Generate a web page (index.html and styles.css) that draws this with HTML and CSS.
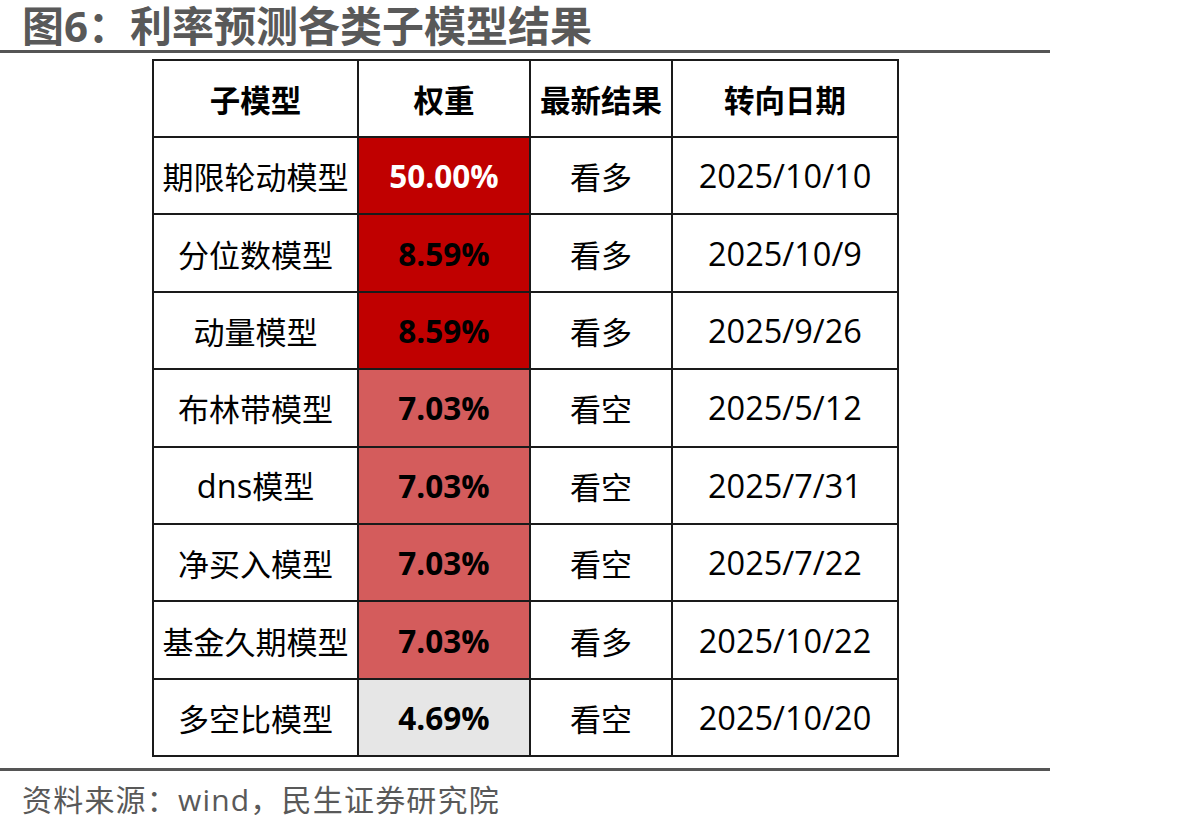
FILE: index.html
```html
<!DOCTYPE html>
<html lang="zh">
<head>
<meta charset="utf-8">
<title>图6：利率预测各类子模型结果</title>
<link rel="stylesheet" href="styles.css">
</head>
<body>
<div class="page">
  <h1 class="title">图6：利率预测各类子模型结果</h1>
  <div class="rule"></div>
  <div class="table-wrap">
    <table class="models">
      <colgroup>
        <col class="c1"><col class="c2"><col class="c3"><col class="c4">
      </colgroup>
      <thead>
        <tr><th>子模型</th><th>权重</th><th>最新结果</th><th>转向日期</th></tr>
      </thead>
      <tbody>
        <tr><td>期限轮动模型</td><td class="w dark white">50.00%</td><td>看多</td><td class="d">2025/10/10</td></tr>
        <tr><td>分位数模型</td><td class="w dark">8.59%</td><td>看多</td><td class="d">2025/10/9</td></tr>
        <tr><td>动量模型</td><td class="w dark">8.59%</td><td>看多</td><td class="d">2025/9/26</td></tr>
        <tr><td>布林带模型</td><td class="w mid">7.03%</td><td>看空</td><td class="d">2025/5/12</td></tr>
        <tr><td><span class="lat">dns</span>模型</td><td class="w mid">7.03%</td><td>看空</td><td class="d">2025/7/31</td></tr>
        <tr><td>净买入模型</td><td class="w mid">7.03%</td><td>看空</td><td class="d">2025/7/22</td></tr>
        <tr><td>基金久期模型</td><td class="w mid">7.03%</td><td>看多</td><td class="d">2025/10/22</td></tr>
        <tr><td>多空比模型</td><td class="w light">4.69%</td><td>看空</td><td class="d">2025/10/20</td></tr>
      </tbody>
    </table>
  </div>
  <div class="rule"></div>
  <p class="source">资料来源：wind，民生证券研究院</p>
</div>
</body>
</html>
```
FILE: styles.css
```css
html, body {
  margin: 0;
  padding: 0;
  background: #ffffff;
}
.page {
  width: 1199px;
  font-family: "Open Sans", "Noto Sans CJK SC", sans-serif;
}
.title {
  margin: 0;
  padding: 0 0 0 22px;
  height: 50px;
  box-sizing: border-box;
  font-family: "Open Sans", "Noto Sans CJK SC", sans-serif;
  font-size: 42px;
  font-weight: 700;
  line-height: 52px;
  color: #595959;
  white-space: nowrap;
}
.rule {
  width: 1050px;
  height: 3px;
  background: #555555;
}
.table-wrap {
  padding: 6px 0 0 152px;
  height: 715px;
  box-sizing: border-box;
}
.models {
  border-collapse: collapse;
  width: 745px;
  table-layout: fixed;
  color: #000;
}
.c1 { width: 205px; }
.c2 { width: 172px; }
.c3 { width: 142px; }
.c4 { width: 226px; }
.models th, .models td {
  border: 2px solid #1a1a1a;
  height: 75.4px;
  padding: 0;
  text-align: center;
  vertical-align: middle;
  font-size: 31px;
  white-space: nowrap;
}
.models th {
  font-weight: 700;
  font-size: 30.5px;
  height: 75px;
}
.models td {
  font-weight: 400;
}
.models td.w {
  font-weight: 700;
  font-size: 31.5px;
}
.models td.d {
  font-size: 32.5px;
}
.lat {
  font-size: 32.5px;
}
.dark { background: #c00000; }
.mid { background: #d45c5c; }
.light { background: #e6e6e6; }
.white { color: #ffffff; }
.source {
  margin: 11px 0 0 22px;
  font-size: 30px;
  letter-spacing: 1.2px;
  line-height: 36px;
  color: #595959;
  white-space: nowrap;
}
```
